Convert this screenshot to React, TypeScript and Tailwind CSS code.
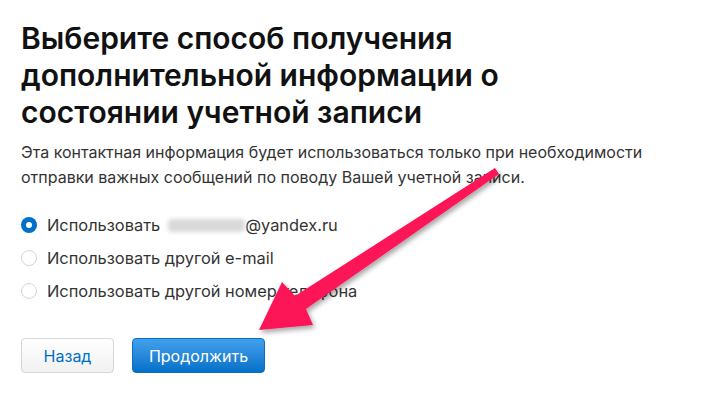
export default function App() {
    const options = [
        { label: 'Использовать', email: true, checked: true },
        { label: 'Использовать другой e-mail', email: false, checked: false },
        { label: 'Использовать другой номер телефона', email: false, checked: false },
    ]

    return (
        <div className="relative w-[711px] h-[412px] overflow-hidden bg-white font-['Inter',sans-serif] text-[#333]">
            <div className="pl-[21px] pt-[20px]">
                <h1 className="text-[30px] leading-[37px] font-semibold text-[#111]">
                    Выберите способ получения <br />дополнительной информации о <br />состоянии учетной записи
                </h1>
                <p className="mt-[9px] text-[16px] leading-[25px] text-[#333]">
                    Эта контактная информация будет использоваться только при необходимости <br />отправки важных сообщений по поводу Вашей учетной записи.
                </p>

                <div className="mt-[24px] flex flex-col gap-[11px]">
                    {options.map((o, i) => (
                        <label key={i} className="flex items-center h-[22px] text-[16.4px] text-[#333]">
                            {o.checked ? (
                                <span className="w-[16px] h-[16px] rounded-full bg-[#0070c9] flex items-center justify-center">
                                    <span className="w-[6px] h-[6px] rounded-full bg-white" />
                                </span>
                            ) : (
                                <span className="w-[16px] h-[16px] rounded-full border border-[#d6d6d6] bg-white" />
                            )}
                            <span className="ml-[10px]">{o.label}</span>
                            {o.email && (
                                <>
                                    <span className="ml-[8px] w-[77px] h-[13px] rounded-sm bg-[#d9d9d9] blur-[2px]" />
                                    <span>@yandex.ru</span>
                                </>
                            )}
                        </label>
                    ))}
                </div>

                <div className="mt-[36px] flex gap-[18px]">
                    <button className="w-[93px] h-[35px] rounded-[4px] border border-[#d6d6d6] bg-gradient-to-b from-white to-[#f1f1f1] text-[#0070c9] text-[16px]">
                        Назад
                    </button>
                    <button className="w-[133px] h-[35px] rounded-[4px] border border-[#0a6fc2] bg-gradient-to-b from-[#42a1ec] to-[#0070c9] text-white text-[16px]">
                        Продолжить
                    </button>
                </div>
            </div>

            <svg className="absolute left-0 top-0" width="711" height="412" viewBox="0 0 711 412">
                <defs>
                    <filter id="sh" x="-20%" y="-20%" width="140%" height="140%">
                        <feDropShadow dx="2" dy="3" stdDeviation="2.5" floodColor="#000" floodOpacity="0.35" />
                    </filter>
                </defs>
                <polygon
                    filter="url(#sh)"
                    fill="#fc1558"
                    points="495,168 499,174 306,309 313,325 259,330 282,282 295,296"
                />
            </svg>
        </div>
    )
}
